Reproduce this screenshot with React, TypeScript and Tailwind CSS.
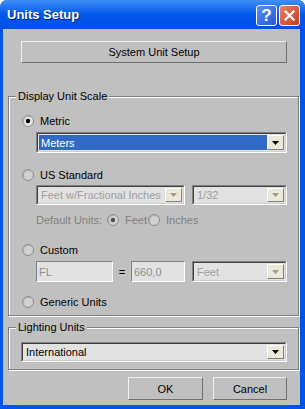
import React from 'react';

type RadioProps = { checked?: boolean; dim?: boolean };

const Radio = ({ checked, dim }: RadioProps) => (
  <svg width="12" height="12" viewBox="0 0 12 12" className="shrink-0">
    <circle cx="6" cy="6" r="5.5" fill={dim ? '#d0d0d0' : '#e6e6e6'} stroke="#8c8c8c" />
    <path d="M2.2 8.6 A4.6 4.6 0 0 1 8.6 2.2" fill="none" stroke="#a8a8a8" strokeWidth="1" />
    {checked && <circle cx="6" cy="6" r="2.2" fill={dim ? '#505050' : '#000'} />}
  </svg>
);

const Arrow = ({ dim }: { dim?: boolean }) => (
  <div className="w-[17px] h-full shrink-0 flex items-center justify-center bg-[#ece9d8] border border-t-[#fff] border-l-[#fff] border-b-[#808080] border-r-[#808080]">
    <svg width="7" height="4" viewBox="0 0 7 4">
      <path d="M0 0h7L3.5 4z" fill={dim ? '#9c9c9c' : '#000'} />
    </svg>
  </div>
);

type ComboProps = { value: string; w: string; selected?: boolean; dim?: boolean };

const Combo = ({ value, w, selected, dim }: ComboProps) => (
  <div className={`${w} h-full flex border border-t-[#808080] border-l-[#808080] border-b-[#fff] border-r-[#fff]`}>
    <div className="flex-1 flex p-px bg-[#e2e2e2] border border-t-[#404040] border-l-[#404040] border-b-[#d4d0c8] border-r-[#d4d0c8]">
      <div className={`flex-1 flex items-center pl-[2px] ${selected ? 'bg-[#316ac5] text-white' : dim ? 'text-[#a0a0a0]' : 'text-black'}`}>
        {value}
      </div>
      <Arrow dim={dim} />
    </div>
  </div>
);

const Field = ({ value, w }: { value: string; w: string }) => (
  <div className={`${w} h-full flex items-center pl-[2px] bg-[#e2e2e2] text-[#909090] border border-t-[#808080] border-l-[#808080] border-b-[#fff] border-r-[#fff]`}>
    {value}
  </div>
);

const Btn = ({ children, w }: { children: React.ReactNode; w: string }) => (
  <button
    type="button"
    className={`${w} h-full flex items-center justify-center bg-[#c0c0c0] text-black border border-t-[#f0f0f0] border-l-[#f0f0f0] border-b-[#707070] border-r-[#707070]`}
  >
    {children}
  </button>
);

const Group = ({ title, children, cls }: { title: string; children: React.ReactNode; cls: string }) => (
  <div className={`relative ml-[5px] w-[291px] border border-[#808080] shadow-[inset_1px_1px_0_#fff,1px_1px_0_#fff] ${cls}`}>
    <span className="absolute -top-[8px] left-[7px] px-[2px] bg-[#c0c0c0] leading-[14px]">{title}</span>
    {children}
  </div>
);

export default function App() {
  return (
    <div className="w-[305px] h-[409px] bg-white font-['Liberation_Sans',Arial,sans-serif] text-[11px] leading-[14px] text-black">
      <div className="w-full h-full flex flex-col rounded-t-[7px] overflow-hidden bg-[#0054e3]">
        {/* title bar */}
        <div className="h-[29px] shrink-0 flex items-center pl-[7px] pr-[5px] bg-gradient-to-b from-[#3d8ff5] via-[#0058ee] to-[#0050e0]">
          <span className="flex-1 text-white font-bold text-[13px] [text-shadow:1px_1px_0_#0a1f73]">Units Setup</span>
          <div className="flex gap-[2px] mt-[1px]">
            <div className="w-[21px] h-[21px] rounded-[3px] border border-white flex items-center justify-center bg-gradient-to-br from-[#5a8ff6] to-[#2357d8] text-white font-bold text-[17px] leading-none">?</div>
            <div className="w-[21px] h-[21px] rounded-[3px] border border-white flex items-center justify-center bg-gradient-to-br from-[#e9805f] to-[#c5381b]">
              <svg width="11" height="11" viewBox="0 0 11 11">
                <path d="M1.5 1.5l8 8M9.5 1.5l-8 8" stroke="#fff" strokeWidth="2.2" strokeLinecap="square" />
              </svg>
            </div>
          </div>
        </div>

        {/* client area */}
        <div className="ml-[3px] mr-[5px] h-[376px] bg-[#c0c0c0] flex flex-col">
          <div className="mt-[12px] ml-[18px] h-[22px]">
            <Btn w="w-[266px]">System Unit Setup</Btn>
          </div>

          <Group title="Display Unit Scale" cls="mt-[33px] h-[220px] pl-[13px]">
            <div className="mt-[17px] h-[14px] flex items-center gap-[6px]">
              <Radio checked />
              <span>Metric</span>
            </div>
            <div className="mt-[4px] ml-[14px] h-[21px]">
              <Combo value="Meters" w="w-[251px]" selected />
            </div>

            <div className="mt-[15px] h-[14px] flex items-center gap-[6px]">
              <Radio dim />
              <span>US Standard</span>
            </div>
            <div className="mt-[3px] ml-[14px] h-[20px] flex gap-[7px]">
              <Combo value="Feet w/Fractional Inches" w="w-[149px]" dim />
              <Combo value="1/32" w="w-[95px]" dim />
            </div>
            <div className="mt-[8px] ml-[14px] h-[14px] flex items-center text-[#808080]">
              <span>Default Units:</span>
              <span className="ml-[5px]"><Radio checked dim /></span>
              <span className="ml-[6px]">Feet</span>
              <span className="ml-[1px]"><Radio dim /></span>
              <span className="ml-[6px]">Inches</span>
            </div>

            <div className="mt-[16px] h-[14px] flex items-center gap-[6px]">
              <Radio dim />
              <span>Custom</span>
            </div>
            <div className="mt-[4px] ml-[14px] h-[21px] flex items-center">
              <Field value="FL" w="w-[77px]" />
              <span className="w-[18px] text-center">=</span>
              <Field value="660,0" w="w-[54px]" />
              <div className="ml-[7px] h-full">
                <Combo value="Feet" w="w-[95px]" dim />
              </div>
            </div>

            <div className="mt-[13px] h-[14px] flex items-center gap-[6px]">
              <Radio dim />
              <span>Generic Units</span>
            </div>
          </Group>

          <Group title="Lighting Units" cls="mt-[11px] h-[43px] pl-[12px]">
            <div className="mt-[14px] h-[20px]">
              <Combo value="International" w="w-[266px]" />
            </div>
          </Group>

          <div className="mt-[7px] h-[23px] flex justify-end gap-[10px] pr-[13px]">
            <Btn w="w-[75px]">OK</Btn>
            <Btn w="w-[74px]">Cancel</Btn>
          </div>
        </div>
      </div>
    </div>
  );
}
